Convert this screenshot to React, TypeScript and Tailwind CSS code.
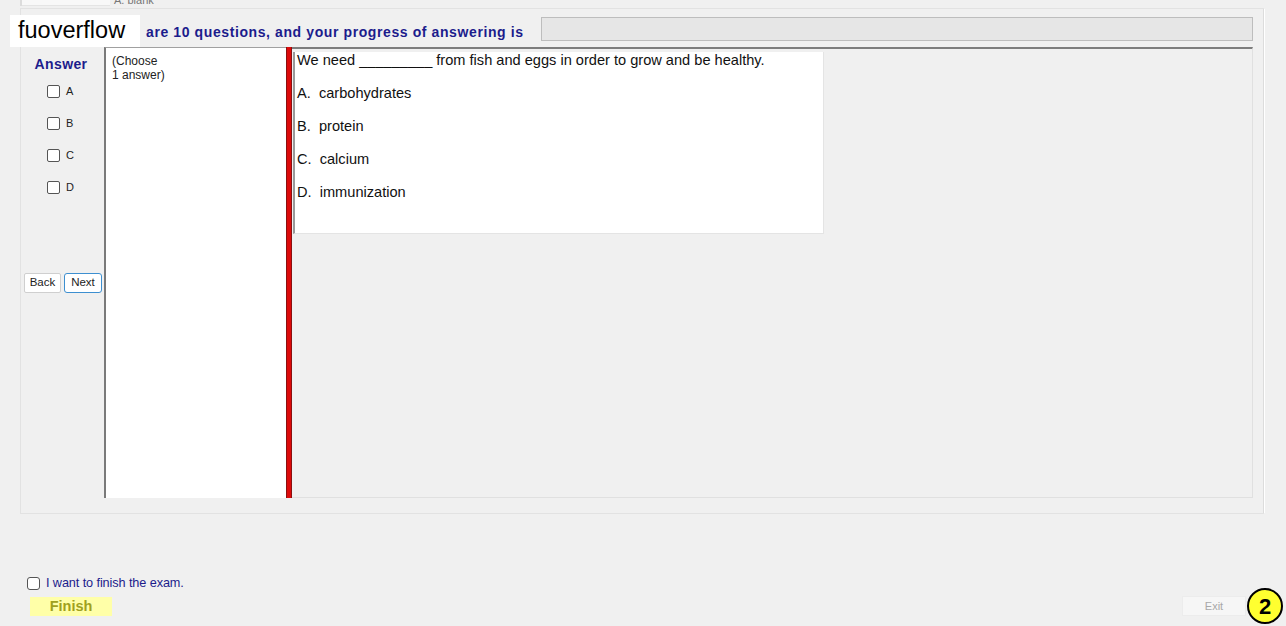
export default function App() {
  const options = [
    ["A.", "carbohydrates"],
    ["B.", "protein"],
    ["C.", "calcium"],
    ["D.", "immunization"],
  ];

  return (
    <div className="relative h-[626px] w-[1286px] overflow-hidden bg-[#f0f0f0] font-['Liberation_Sans',Arial,sans-serif] text-black">
      {/* cut-off row from the previous screen */}
      <div className="flex h-[6px]">
        <div className="ml-[20px] w-[2px] bg-[#dcdcdc]" />
        <div className="w-[88px] border-b border-[#e4e4e4] bg-[#f8f8f8]" />
        <div className="ml-[4px] mt-[-5px] text-[11px] leading-none text-[#777]">A. blank</div>
      </div>

      {/* main frame */}
      <div className="ml-[20px] mt-[2px] h-[506px] w-[1245px] border border-[#e2e2e2] border-r-white pr-[11px] shadow-[inset_-1px_0_0_#dcdcdc]">
        {/* header */}
        <div className="flex h-[38px] items-start">
          <div className="ml-[125px] mt-[15px] w-[395px] whitespace-nowrap text-[14px] font-bold leading-[16px] tracking-[0.6px] text-[#1c1c8c]">
            are 10 questions, and your progress of answering is
          </div>
          <div className="mt-[8px] h-[24px] w-[713px] border border-[#bdbdbd] bg-[#e6e6e6]" />
        </div>

        {/* content */}
        <div className="flex h-[451px]">
          <div className="flex w-[83px] flex-col items-center">
            <div className="ml-[-3px] mt-[7px] text-[14px] font-bold tracking-[0.4px] text-[#1c1c8c]">Answer</div>
            <div className="ml-[-4px] mt-[7px] flex flex-col gap-[14px]">
              {["A", "B", "C", "D"].map((l) => (
                <label key={l} className="flex h-[18px] items-center gap-[6px] text-[11px] text-[#222]">
                  <span className="h-[13px] w-[13px] rounded-[2px] border border-[#555] bg-white" />
                  {l}
                </label>
              ))}
            </div>
            <div className="mt-[77px] flex gap-[3px] self-start pl-[3px]">
              <button className="h-[20px] w-[37px] rounded-[2px] border border-[#cfcfcf] bg-white text-[11.5px] text-[#222]">
                Back
              </button>
              <button className="h-[20px] w-[38px] rounded-[3px] border border-[#3d8fd0] bg-white text-[11.5px] text-[#222]">
                Next
              </button>
            </div>
          </div>

          <div className="w-[182px] border-l-2 border-t border-l-[#7a7a7a] border-t-[#a0a0a0] bg-white pl-[6px] pt-[6px] text-[12px] leading-[14px] text-[#222]">
            (Choose
            <br />1 answer)
          </div>

          <div className="w-[6px] border-x border-x-[#8a1010] bg-[#dd0a0a]" />

          <div className="flex-1 border-r border-t-2 border-b border-r-[#e0e0e0] border-t-[#7d7d7d] border-b-[#e0e0e0] pl-[1px] pt-[1px]">
            <div className="h-[182px] w-[531px] border-l-2 border-b border-r border-l-[#9a9a9a] border-b-[#e4e4e4] border-r-[#e4e4e4] bg-white pl-[2px] text-[14.6px] text-[#111]">
              <div className="mt-[2px] leading-[17px]">
                We need _________ from fish and eggs in order to grow and be healthy.
              </div>
              <div className="mt-[16px] flex flex-col gap-[16px]">
                {options.map(([k, v]) => (
                  <div key={k} className="whitespace-pre leading-[17px]">
                    {k}  {v}
                  </div>
                ))}
              </div>
            </div>
          </div>
        </div>
      </div>

      {/* watermark */}
      <div className="absolute left-[10px] top-[15px] flex h-[32px] w-[130px] items-center bg-white pl-[8px] font-['Liberation_Sans',Arial,sans-serif] text-[23.5px] text-black">
        fuoverflow
      </div>

      {/* footer */}
      <div className="ml-[27px] mt-[60px] flex items-center gap-[6px]">
        <span className="h-[13px] w-[13px] rounded-[3px] border border-[#555] bg-white" />
        <span className="text-[12.7px] tracking-[-0.1px] text-[#1c1c8c]">I want to finish the exam.</span>
      </div>
      <div className="mt-[4px] flex items-start">
        <button className="ml-[30px] h-[19px] w-[82px] bg-[#ffffa8] text-[14.5px] font-bold leading-[19px] text-[#a0a020]">
          Finish
        </button>
        <button className="ml-[1070px] mt-[-1px] h-[20px] w-[64px] border border-[#ececec] bg-[#f6f6f6] text-[11px] text-[#a8a8a8]">
          Exit
        </button>
      </div>
      <div className="absolute left-[1247px] top-[588px] flex h-[36px] w-[36px] items-center justify-center rounded-full border-2 border-black bg-[#ffff30] text-[22px] font-bold text-black">
        2
      </div>
    </div>
  );
}
